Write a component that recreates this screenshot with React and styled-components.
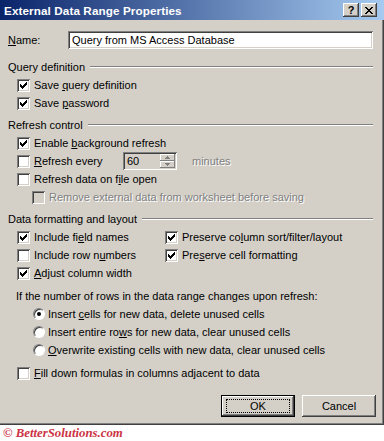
import React from 'react';
import styled, { createGlobalStyle } from 'styled-components';

const GlobalStyle = createGlobalStyle`
  body {
    margin: 0;
    background: #ffffff;
    font-family: "Liberation Sans", Arial, sans-serif;
  }
`;

function App() {
  return (
    <>
      <GlobalStyle />
      <Window>
        <TitleBar>
          <TitleText>External Data Range Properties</TitleText>
          <TitleButtons>
            <TitleButton>?</TitleButton>
            <TitleButton>
              <svg width="8" height="7" viewBox="0 0 8 7" shapeRendering="crispEdges">
                <path d="M0 0h2v1h-2zM6 0h2v1h-2zM1 1h2v1h-2zM5 1h2v1h-2zM2 2h4v1h-4zM3 3h2v1h-2zM2 4h4v1h-4zM1 5h2v1h-2zM5 5h2v1h-2zM0 6h2v1h-2zM6 6h2v1h-2z" fill="#000" />
              </svg>
            </TitleButton>
          </TitleButtons>
        </TitleBar>

        <Body>
          <NameRow>
            <NameLabel><U>N</U>ame:</NameLabel>
            <TextBox>Query from MS Access Database</TextBox>
          </NameRow>

          <GroupHeader $top={9}>Query definition</GroupHeader>
          <CheckRow checked label={<>Save <U>q</U>uery definition</>} />
          <CheckRow checked label={<>Save <U>p</U>assword</>} />

          <GroupHeader $top={4}>Refresh control</GroupHeader>
          <CheckRow checked label={<>Enable <U>b</U>ackground refresh</>} />
          <Row $indent={9}>
            <CheckBox />
            <FixedLabel><U>R</U>efresh every</FixedLabel>
            <Spinner>
              <SpinValue>60</SpinValue>
              <SpinButtons>
                <SpinButton>
                  <svg width="5" height="3" viewBox="0 0 5 3"><path d="M2 0h1v1h1v1h1v1h-5v-1h1v-1h1z" fill="#808080" /></svg>
                </SpinButton>
                <SpinButton>
                  <svg width="5" height="3" viewBox="0 0 5 3"><path d="M0 0h5v1h-1v1h-1v1h-1v-1h-1v-1h-1z" fill="#808080" /></svg>
                </SpinButton>
              </SpinButtons>
            </Spinner>
            <Disabled style={{ marginLeft: 11 }}>minutes</Disabled>
          </Row>
          <CheckRow label={<>Refresh data on f<U>i</U>le open</>} />
          <Row $indent={24}>
            <CheckBox $disabled />
            <Disabled>Remove external data from worksheet before saving</Disabled>
          </Row>

          <GroupHeader $top={4}>Data formatting and layout</GroupHeader>
          <FormatGrid>
            <CheckRow $indent={0} checked label={<>Include fi<U>e</U>ld names</>} />
            <CheckRow $indent={0} checked label={<>Preserve co<U>l</U>umn sort/filter/layout</>} />
            <CheckRow $indent={0} label={<>Include row n<U>u</U>mbers</>} />
            <CheckRow $indent={0} checked label={<>Pre<U>s</U>erve cell formatting</>} />
            <CheckRow $indent={0} checked label={<><U>A</U>djust column width</>} />
          </FormatGrid>

          <Question>If the number of rows in the data range changes upon refresh:</Question>
          <RadioRow selected label={<>Insert <U>c</U>ells for new data, delete unused cells</>} />
          <RadioRow label={<>Insert entire ro<U>w</U>s for new data, clear unused cells</>} />
          <RadioRow label={<><U>O</U>verwrite existing cells with new data, clear unused cells</>} />

          <Row $indent={9} style={{ marginTop: 5 }}>
            <CheckBox />
            <span><U>F</U>ill down formulas in columns adjacent to data</span>
          </Row>

          <ButtonRow>
            <DialogButton $default>
              <FocusRing>OK</FocusRing>
            </DialogButton>
            <DialogButton>Cancel</DialogButton>
          </ButtonRow>
        </Body>
      </Window>
      <Footer>© BetterSolutions.com</Footer>
    </>
  );
}

function CheckRow({ checked, label, $indent = 9 }) {
  return (
    <Row $indent={$indent}>
      <CheckBox>
        {checked && (
          <svg width="7" height="7" viewBox="0 0 7 7" shapeRendering="crispEdges">
            <path d="M6 0h1v3h-1v1h-1v1h-1v1h-1v1h-1v-1h-1v-1h-1v-3h1v1h1v1h1v-1h1v-1h1v-1h1z" fill="#000" />
          </svg>
        )}
      </CheckBox>
      <span>{label}</span>
    </Row>
  );
}

function RadioRow({ selected, label }) {
  return (
    <Row $indent={25} $gap={3}>
      <Radio>{selected && <Dot />}</Radio>
      <span>{label}</span>
    </Row>
  );
}

export default App;

const Window = styled.div`
  width: 384px;
  height: 425px;
  box-sizing: border-box;
  background: #d4d0c8;
  box-shadow: inset -1px -1px #404040, inset -2px -2px #808080;
  color: #000;
  font-size: 11px;
  overflow: hidden;
`;

const TitleBar = styled.div`
  height: 20px;
  display: flex;
  align-items: center;
  justify-content: space-between;
  padding: 0 7px 0 4px;
  background: linear-gradient(to right, #0a246a, #a6caf0);
`;

const TitleText = styled.div`
  color: #fff;
  font-weight: bold;
  font-size: 11.7px;
  letter-spacing: 0.1px;
`;

const TitleButtons = styled.div`
  display: flex;
  gap: 2px;
`;

const TitleButton = styled.div`
  width: 16px;
  height: 14px;
  box-sizing: border-box;
  display: flex;
  align-items: center;
  justify-content: center;
  background: #d4d0c8;
  box-shadow: inset -1px -1px #404040, inset 1px 1px #fff, inset -2px -2px #808080;
  font-weight: bold;
  font-size: 11px;
  line-height: 1;
`;

const Body = styled.div`
  padding: 0 11px 0 8px;
`;

const U = styled.span`
  text-decoration: underline;
`;

const NameRow = styled.div`
  display: flex;
  align-items: center;
  margin-top: 11px;
  height: 18px;
`;

const NameLabel = styled.span`
  width: 60px;
`;

const Sunken = styled.div`
  box-sizing: border-box;
  box-shadow: inset 1px 1px #808080, inset -1px -1px #fff, inset 2px 2px #404040, inset -2px -2px #d4d0c8;
`;

const TextBox = styled(Sunken)`
  flex: 1;
  height: 18px;
  background: #fff;
  padding: 2px 4px;
  line-height: 14px;
`;

const GroupHeader = styled.div`
  display: flex;
  align-items: center;
  height: 18px;
  margin-top: ${p => p.$top}px;

  &::after {
    content: '';
    flex: 1;
    margin-left: 5px;
    height: 0;
    border-top: 1px solid #808080;
    border-bottom: 1px solid #fff;
  }
`;

const Row = styled.div`
  display: flex;
  align-items: center;
  height: 18px;
  padding-left: ${p => p.$indent}px;
  gap: ${p => p.$gap ?? 4}px;
  white-space: nowrap;
`;

const CheckBox = styled(Sunken)`
  width: 13px;
  height: 13px;
  flex: none;
  display: flex;
  align-items: center;
  justify-content: center;
  background: ${p => (p.$disabled ? '#d4d0c8' : '#fff')};
`;

const FixedLabel = styled.span`
  width: 85px;
`;

const Disabled = styled.span`
  color: #808080;
  text-shadow: 1px 1px #fff;
`;

const Spinner = styled(Sunken)`
  width: 54px;
  height: 18px;
  display: flex;
  align-items: center;
  justify-content: space-between;
  padding: 2px 2px 2px 4px;
  background: #d4d0c8;
`;

const SpinValue = styled.span`
  line-height: 14px;
`;

const SpinButtons = styled.div`
  display: flex;
  flex-direction: column;
  width: 15px;
  height: 14px;
`;

const SpinButton = styled.div`
  flex: 1;
  display: flex;
  align-items: center;
  justify-content: center;
  background: #d4d0c8;
  box-shadow: inset -1px -1px #808080, inset 1px 1px #fff;
`;

const FormatGrid = styled.div`
  display: grid;
  grid-template-columns: 148px 1fr;
  padding-left: 9px;
`;

const Question = styled.div`
  margin-top: 5px;
  height: 18px;
  line-height: 18px;
  padding-left: 8px;
`;

const Radio = styled.div`
  width: 12px;
  height: 12px;
  flex: none;
  box-sizing: border-box;
  border-radius: 50%;
  background: #fff;
  border: 1px solid;
  border-color: #808080 #fff #fff #808080;
  box-shadow: inset 1px 1px #404040;
  display: flex;
  align-items: center;
  justify-content: center;
`;

const Dot = styled.div`
  width: 4px;
  height: 4px;
  border-radius: 50%;
  background: #000;
`;

const ButtonRow = styled.div`
  display: flex;
  justify-content: flex-end;
  gap: 7px;
  margin-top: 13px;
  margin-right: -3px;
`;

const DialogButton = styled.div`
  width: 74px;
  height: 22px;
  box-sizing: border-box;
  display: flex;
  align-items: center;
  justify-content: center;
  background: #d4d0c8;
  box-shadow: ${p =>
    p.$default
      ? 'inset 0 0 0 1px #000, inset -2px -2px #404040, inset 2px 2px #fff, inset -3px -3px #808080'
      : 'inset -1px -1px #404040, inset 1px 1px #fff, inset -2px -2px #808080'};
`;

const FocusRing = styled.div`
  width: 64px;
  height: 14px;
  box-sizing: border-box;
  border: 1px dotted #000;
  display: flex;
  align-items: center;
  justify-content: center;
`;

const Footer = styled.div`
  height: 16px;
  padding-left: 3px;
  color: #cc3344;
  font-family: "Liberation Serif", "Times New Roman", serif;
  font-style: italic;
  font-weight: bold;
  font-size: 12.8px;
  line-height: 16px;
`;
